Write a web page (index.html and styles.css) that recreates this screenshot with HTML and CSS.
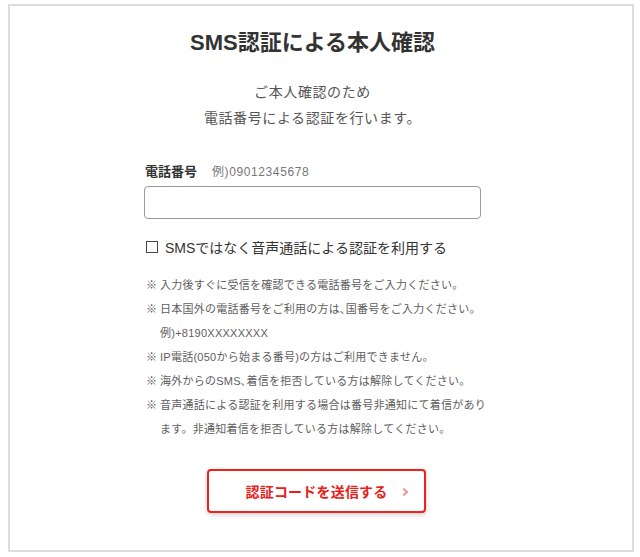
FILE: index.html
```html
<!DOCTYPE html>
<html lang="ja">
<head>
<meta charset="utf-8">
<link rel="stylesheet" href="styles.css">
</head>
<body>
<div class="box">
  <div class="col">
    <h1 class="title">SMS認証による本人確認</h1>
    <p class="lead">ご本人確認のため<br>電話番号による認証を行います。</p>
    <div class="field-label"><span class="lbl">電話番号</span><span class="ex">例)09012345678</span></div>
    <div class="input"></div>
    <div class="check"><span class="cb"></span><span>SMSではなく音声通話による認証を利用する</span></div>
    <ul class="notes">
      <li><span class="mk">※</span><span>入力後すぐに受信を確認できる電話番号をご入力ください。</span></li>
      <li><span class="mk">※</span><span>日本国外の電話番号をご利用の方は､国番号をご入力ください。<br>例)+8190XXXXXXXX</span></li>
      <li><span class="mk">※</span><span>IP電話(050から始まる番号)の方はご利用できません。</span></li>
      <li><span class="mk">※</span><span>海外からのSMS､着信を拒否している方は解除してください。</span></li>
      <li><span class="mk">※</span><span>音声通話による認証を利用する場合は番号非通知にて着信があり<br>ます。非通知着信を拒否している方は解除してください。</span></li>
    </ul>
    <div class="btn-wrap">
      <div class="btn"><span class="btn-text">認証コードを送信する</span><span class="chev"></span></div>
    </div>
  </div>
</div>
</body>
</html>
```
FILE: styles.css
```css
* { box-sizing: border-box; }
html, body { margin: 0; padding: 0; background: #fff; }
body {
  font-family: "Liberation Sans", "Noto Sans CJK JP", sans-serif;
  color: #444;
}
.box {
  margin: 4px 6px 0 8px;
  width: 626px;
  height: 548px;
  border: 2px solid #ddd;
}
.col {
  width: 337px;
  margin-left: 134px;
}
.title {
  margin: 0;
  padding-top: 22px;
  font-size: 22px;
  line-height: 30px;
  font-weight: bold;
  color: #333;
  text-align: center;
}
.lead {
  margin: 21px 0 0;
  font-size: 14px;
  line-height: 26px;
  text-align: center;
  color: #555;
  letter-spacing: 0.6px;
}
.field-label {
  margin-top: 30px;
  display: flex;
  align-items: baseline;
  padding-left: 1px;
}
.lbl { font-size: 13px; font-weight: bold; color: #333; }
.ex { font-size: 12px; color: #777; margin-left: 15px; letter-spacing: 0.6px; }
.input {
  margin-top: 6px;
  height: 33px;
  border: 1px solid #999;
  border-radius: 4px;
  background: #fff;
}
.check {
  margin-top: 18px;
  display: flex;
  align-items: center;
  font-size: 14px;
  color: #333;
  padding-left: 2px;
}
.cb {
  width: 12px;
  height: 12px;
  border: 1px solid #444;
  margin-right: 7px;
}
.notes {
  list-style: none;
  margin: 16px 0 0;
  padding: 0 0 0 2px;
  font-size: 11px;
  line-height: 24px;
  color: #5e5e5e;
  width: 345px;
  white-space: nowrap;
  letter-spacing: 0.25px;
}
.notes li { display: flex; }
.mk { width: 14px; flex: none; }
.btn-wrap {
  margin-top: 28px;
  padding-left: 63px;
}
.btn {
  width: 219px;
  height: 44px;
  border: 2px solid #f0201a;
  border-radius: 4px;
  background: #fff;
  box-shadow: 0 2px 5px rgba(0,0,0,0.18);
  display: flex;
  align-items: center;
  justify-content: center;
  position: relative;
}
.btn-text {
  color: #e8201a;
  font-weight: bold;
  font-size: 14px;
  letter-spacing: 0.2px;
}
.chev {
  position: absolute;
  right: 17px;
  top: 18px;
  width: 6px;
  height: 6px;
  border-top: 2px solid #f39a92;
  border-right: 2px solid #f39a92;
  transform: rotate(45deg);
}
```
